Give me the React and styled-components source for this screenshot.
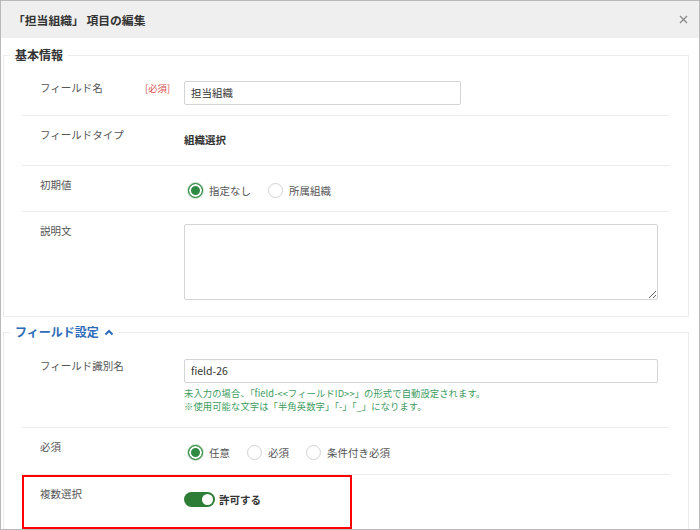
import React from "react";
import styled, { createGlobalStyle } from "styled-components";

const Global = createGlobalStyle`
  html, body { margin: 0; padding: 0; background: #fff; }
  body { font-family: "Noto Sans CJK JP", "Noto Sans", sans-serif; }
  * { box-sizing: border-box; }
`;

const Dialog = styled.div`
  width: 700px;
  height: 530px;
  border: 1px solid #b9b9b9;
  overflow: hidden;
  display: flex;
  flex-direction: column;
  background: #fff;
`;

const Header = styled.div`
  height: 37px;
  flex: none;
  background: #efefef;
  display: flex;
  align-items: center;
  justify-content: space-between;
  padding: 0 10px 0 12px;
`;

const Title = styled.div`
  font-size: 11.8px;
  font-weight: 700;
  color: #333;
`;

const Close = styled.button`
  border: none;
  background: none;
  padding: 0;
  width: 12px;
  height: 12px;
  display: flex;
  align-items: center;
  justify-content: center;
`;

const Body = styled.div`
  padding: 17px 10px 0 2px;
  display: flex;
  flex-direction: column;
  gap: 15px;
`;

const Section = styled.section`
  border: 1px solid #ececec;
  border-top: none;
  padding: 0 18px 0 17px;
`;

const SectionHead = styled.div`
  display: flex;
  align-items: center;
  height: 16px;
  margin: -8px -19px 6px -18px;
  &::before {
    content: "";
    width: 7px;
    flex: none;
    border-top: 1px solid #ececec;
  }
  &::after {
    content: "";
    flex: 1;
    border-top: 1px solid #ececec;
  }
`;

const Legend = styled.div`
  padding: 0 5px;
  font-size: 12px;
  line-height: 16px;
  font-weight: 700;
  color: ${(p) => (p.$blue ? "#2d6cb8" : "#333")};
  display: flex;
  align-items: center;
  gap: 5px;
`;

const Row = styled.div`
  position: relative;
  display: grid;
  grid-template-columns: 105px 39px 1fr;
  align-items: start;
  height: ${(p) => p.$h}px;
  padding: ${(p) => p.$pt || 12}px 12px 0 19px;
  border-bottom: ${(p) => (p.$last ? "none" : "1px solid #ededed")};
`;

const Label = styled.div`
  font-size: 10.5px;
  line-height: 14px;
  color: #555;
`;

const Required = styled.div`
  font-size: 9.4px;
  line-height: 14px;
  color: #d9534f;
`;

const Cell = styled.div`
  grid-column: 3;
  display: flex;
  flex-direction: column;
  min-width: 0;
`;

const Input = styled.div`
  width: ${(p) => p.$w || "100%"};
  height: 24px;
  border: 1px solid #d4d4d4;
  border-radius: 2px;
  padding: 0 6px;
  font-size: 10.5px;
  line-height: 22px;
  color: #333;
`;

const TextArea = styled.textarea`
  width: 100%;
  height: 76px;
  border: 1px solid #d4d4d4;
  border-radius: 2px;
  padding: 4px 6px;
  font-family: inherit;
  font-size: 10.5px;
  display: block;
  margin: 0;
  resize: both;
  outline: none;
`;

const Value = styled.div`
  height: 24px;
  line-height: 24px;
  font-size: 10.5px;
  font-weight: 700;
  color: #333;
`;

const Help = styled.div`
  margin-top: 4px;
  font-size: 9.3px;
  line-height: 12.5px;
  color: #3d9c5e;
  letter-spacing: 0.1px;
`;

const RadioGroup = styled.div`
  display: flex;
  align-items: center;
  height: 24px;
  padding-left: 4px;
  gap: 17px;
`;

const RadioItem = styled.label`
  display: flex;
  align-items: center;
  gap: 6px;
  font-size: 10.5px;
  color: #555;
`;

const RadioCircle = styled.span`
  width: 15px;
  height: 15px;
  border-radius: 50%;
  flex: none;
  border: 1px solid ${(p) => (p.$on ? "#2f8a43" : "#d2d2d2")};
  background: ${(p) => (p.$on ? "#2f8a43" : "#fff")};
  box-shadow: ${(p) =>
    p.$on ? "inset 0 0 0 2px #fff, 0 0 0 1px rgba(47,138,67,0.25)" : "none"};
`;

const ToggleRow = styled.div`
  display: flex;
  align-items: center;
  height: 24px;
  gap: 4px;
`;

const Track = styled.span`
  width: 31px;
  height: 15px;
  border-radius: 8px;
  background: #2e7d36;
  display: flex;
  align-items: center;
  justify-content: flex-end;
  padding: 0 2px;
`;

const Knob = styled.span`
  width: 11px;
  height: 11px;
  border-radius: 50%;
  background: #fff;
`;

const ToggleText = styled.span`
  font-size: 10.5px;
  font-weight: 700;
  color: #333;
`;

const Highlight = styled.div`
  position: absolute;
  left: 1px;
  top: 0px;
  width: 330px;
  height: 54px;
  border: 2px solid #ff0000;
  pointer-events: none;
`;

function Radio({ on, children }) {
  return (
    <RadioItem>
      <RadioCircle $on={on} />
      {children}
    </RadioItem>
  );
}

export default function App() {
  return (
    <>
      <Global />
      <Dialog>
        <Header>
          <Title>「担当組織」 項目の編集</Title>
          <Close aria-label="close">
            <svg width="9" height="9" viewBox="0 0 9 9">
              <path d="M1 1 L8 8 M8 1 L1 8" stroke="#8a8a8a" strokeWidth="1.3" />
            </svg>
          </Close>
        </Header>
        <Body>
          <Section>
            <SectionHead>
              <Legend>基本情報</Legend>
            </SectionHead>
            <Row $h={47}>
              <Label>フィールド名</Label>
              <Required>[必須]</Required>
              <Cell>
                <Input $w="277px">担当組織</Input>
              </Cell>
            </Row>
            <Row $h={50}>
              <Label>フィールドタイプ</Label>
              <Cell>
                <Value>組織選択</Value>
              </Cell>
            </Row>
            <Row $h={46}>
              <Label>初期値</Label>
              <Cell>
                <RadioGroup>
                  <Radio on>指定なし</Radio>
                  <Radio>所属組織</Radio>
                </RadioGroup>
              </Cell>
            </Row>
            <Row $h={104} $last>
              <Label>説明文</Label>
              <Cell>
                <TextArea defaultValue="" />
              </Cell>
            </Row>
          </Section>
          <Section>
            <SectionHead>
              <Legend $blue>
                フィールド設定
                <svg width="10" height="7" viewBox="0 0 10 7">
                  <path d="M1.5 5.5 L5 2 L8.5 5.5" fill="none" stroke="#2d6cb8" strokeWidth="2" />
                </svg>
              </Legend>
            </SectionHead>
            <Row $h={82} $pt={13}>
              <Label>フィールド識別名</Label>
              <Cell>
                <Input>field-26</Input>
                <Help>
                  未入力の場合、「field-&lt;&lt;フィールドID&gt;&gt;」の形式で自動設定されます。
                  <br />
                  ※使用可能な文字は「半角英数字」「-」「_」になります。
                </Help>
              </Cell>
            </Row>
            <Row $h={47}>
              <Label>必須</Label>
              <Cell>
                <RadioGroup>
                  <Radio on>任意</Radio>
                  <Radio>必須</Radio>
                  <Radio>条件付き必須</Radio>
                </RadioGroup>
              </Cell>
            </Row>
            <Row $h={60} $last>
              <Label>複数選択</Label>
              <Cell>
                <ToggleRow>
                  <Track>
                    <Knob />
                  </Track>
                  <ToggleText>許可する</ToggleText>
                </ToggleRow>
              </Cell>
              <Highlight />
            </Row>
          </Section>
        </Body>
      </Dialog>
    </>
  );
}
